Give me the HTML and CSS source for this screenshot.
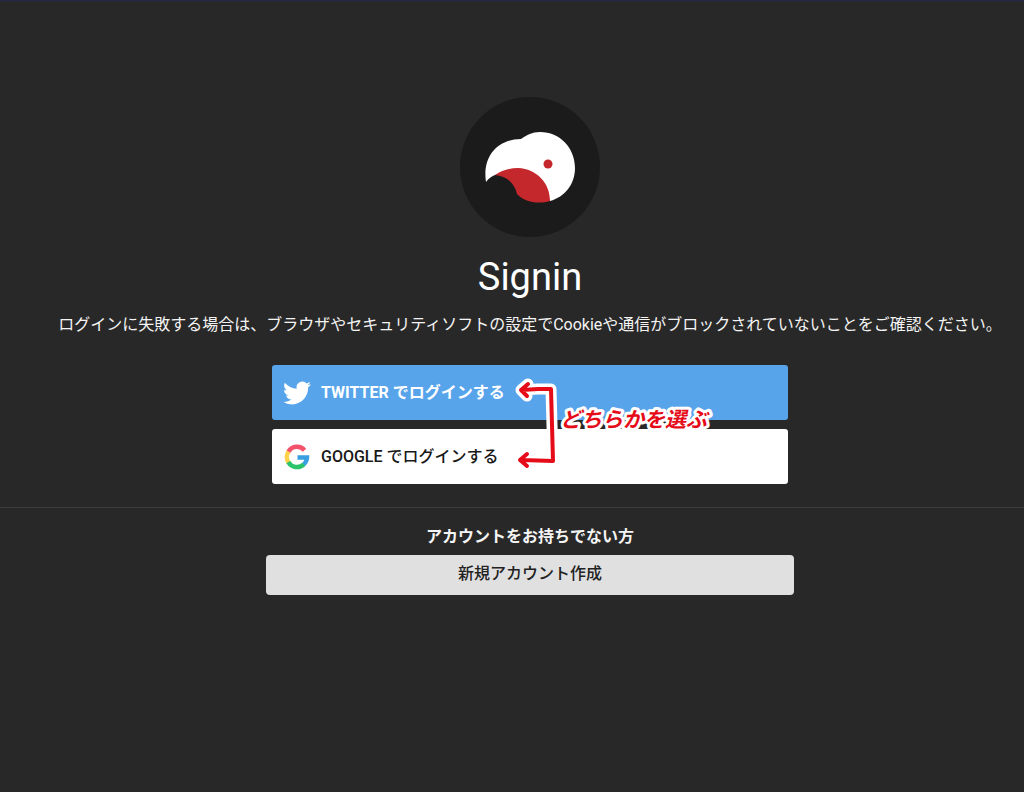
FILE: index.html
```html
<!DOCTYPE html>
<html lang="ja">
<head>
<meta charset="utf-8">
<meta name="viewport" content="width=device-width, initial-scale=1">
<title>Signin</title>
<link rel="stylesheet" href="styles.css">
</head>
<body>
<main class="page">
  <section class="signin">
    <svg class="logo" viewBox="0 0 140 140" role="img" aria-label="Logo">
      <circle cx="70" cy="70" r="70" fill="#1b1b1b"/>
      <path fill="#fff" d="M26 85C22 59 38 42 61 42C67 38 72 35 80 35C100 35 115 51 115 71C115 87 105 100 90 104L60 74L35 78C32 79 29 81 26 85Z"/>
      <path fill="#c4282d" d="M35 78C42 73 50 71 58 71C77 72 90 86 90 104C77 108 63 104 57 97C54 85 46 79 35 78Z"/>
      <circle cx="88" cy="67" r="4.500" fill="#c4282d"/>
    </svg>
    <h1 class="title">Signin</h1>
    <p class="note">ログインに失敗する場合は、ブラウザやセキュリティソフトの設定でCookieや通信がブロックされていないことをご確認ください。</p>
    <div class="providers">
      <button class="provider twitter" type="button">
        <svg class="icon" viewBox="0 0 24 24" aria-hidden="true"><path fill="#fff" d="M23.950 4.570a10 10 0 0 1-2.820.770 4.960 4.960 0 0 0 2.160-2.720c-.950.550-2 .950-3.130 1.180a4.920 4.920 0 0 0-8.380 4.480A13.930 13.930 0 0 1 1.640 3.160a4.920 4.920 0 0 0 1.520 6.570 4.900 4.900 0 0 1-2.230-.610v.060a4.920 4.920 0 0 0 3.950 4.830 5 5 0 0 1-2.220.080 4.930 4.930 0 0 0 4.600 3.420A9.870 9.870 0 0 1 0 19.540a13.990 13.990 0 0 0 7.550 2.210c9.050 0 14-7.500 14-13.980 0-.210 0-.420-.020-.630a9.930 9.930 0 0 0 2.420-2.570z"/></svg>
        <span>TWITTER でログインする</span>
      </button>
      <button class="provider google" type="button">
        <svg class="icon" viewBox="0 0 28 28" fill="none" stroke-width="4.500" aria-hidden="true">
          <path stroke="#ffd24a" d="M5.700 19.800A10 10 0 0 1 5.700 8.200"/>
          <path stroke="#f4526a" d="M5.500 8.500A10 10 0 0 1 21.500 7.200"/>
          <path stroke="#3a9fe0" d="M14.500 14.500H24A10 10 0 0 1 20.500 21.600"/>
          <path stroke="#2cc46b" d="M20.800 21.300A10 10 0 0 1 5.300 19.200"/>
        </svg>
        <span>GOOGLE でログインする</span>
      </button>
      <svg class="hint" viewBox="0 0 210 110" role="img" aria-label="どちらかを選ぶ">
        <g class="halo"><path d="M18 19L11 25L17 31M12 25L28 24L41 24L43 96L12 95M17 89L10 95L17 101"/></g>
        <g class="ink"><path d="M18 19L11 25L17 31M12 25L28 24L41 24L43 96L12 95M17 89L10 95L17 101"/></g>
        <text class="hint-text" x="50" y="62">どちらかを選ぶ</text>
      </svg>
    </div>
  </section>
  <section class="signup">
    <h2 class="signup-title">アカウントをお持ちでない方</h2>
    <button class="create" type="button">新規アカウント作成</button>
  </section>
</main>
</body>
</html>
```
FILE: styles.css
```css
* {
  box-sizing: border-box;
}

body {
  margin: 0;
  background: #282828;
  color: #f4f4f4;
  font-family: Roboto, "Noto Sans CJK JP", sans-serif;
  font-size: 16px;
  line-height: 24px;
}

.page {
  min-height: 100vh;
  border-top: 1px solid #23284a;
  overflow-x: hidden;
}

.signin,
.signup {
  display: flex;
  flex-direction: column;
  align-items: center;
  padding-left: 36px;
}

.signin {
  padding-top: 96px;
  padding-bottom: 23px;
  border-bottom: 1px solid #3c3c3c;
}

.logo {
  width: 140px;
  height: 140px;
}

.title {
  margin: 16px 0 12px;
  font-size: 38px;
  font-weight: 400;
  line-height: 48px;
  color: #fff;
}

.note {
  margin: 0 0 28px;
  font-weight: 400;
  text-align: center;
}

.providers {
  position: relative;
  display: flex;
  flex-direction: column;
  gap: 9px;
  width: 100%;
  max-width: 516px;
}

.provider {
  display: flex;
  align-items: center;
  gap: 10px;
  min-height: 55px;
  padding: 13px 11px;
  border: 0;
  border-radius: 3px;
  font: inherit;
  font-weight: 700;
  line-height: 28px;
  cursor: pointer;
}

.twitter {
  background: #58a4eb;
  color: #fff;
}

.google {
  background: #fff;
  color: #181818;
  font-weight: 500;
}

.icon {
  width: 28px;
  height: 28px;
}

.hint {
  position: absolute;
  top: 0;
  left: 238px;
  width: 210px;
  height: 110px;
  pointer-events: none;
}

.halo,
.ink {
  fill: none;
  stroke-linecap: round;
  stroke-linejoin: round;
}

.halo {
  stroke: #fff;
  stroke-width: 11px;
}

.ink {
  stroke: #e60b18;
  stroke-width: 4px;
}

.hint-text {
  fill: #e60b18;
  stroke: #fff;
  stroke-width: 6px;
  stroke-linejoin: round;
  paint-order: stroke;
  font-size: 21px;
  font-style: italic;
  font-weight: 700;
}

.signup {
  padding-top: 17px;
}

.signup-title {
  margin: 0 0 6px;
  font-size: 16px;
  font-weight: 700;
  line-height: 24px;
}

.create {
  width: 100%;
  max-width: 528px;
  padding: 7px 16px 9px;
  border: 0;
  border-radius: 4px;
  background: #e0e0e0;
  color: #222;
  font: inherit;
  font-weight: 500;
  cursor: pointer;
}
```
